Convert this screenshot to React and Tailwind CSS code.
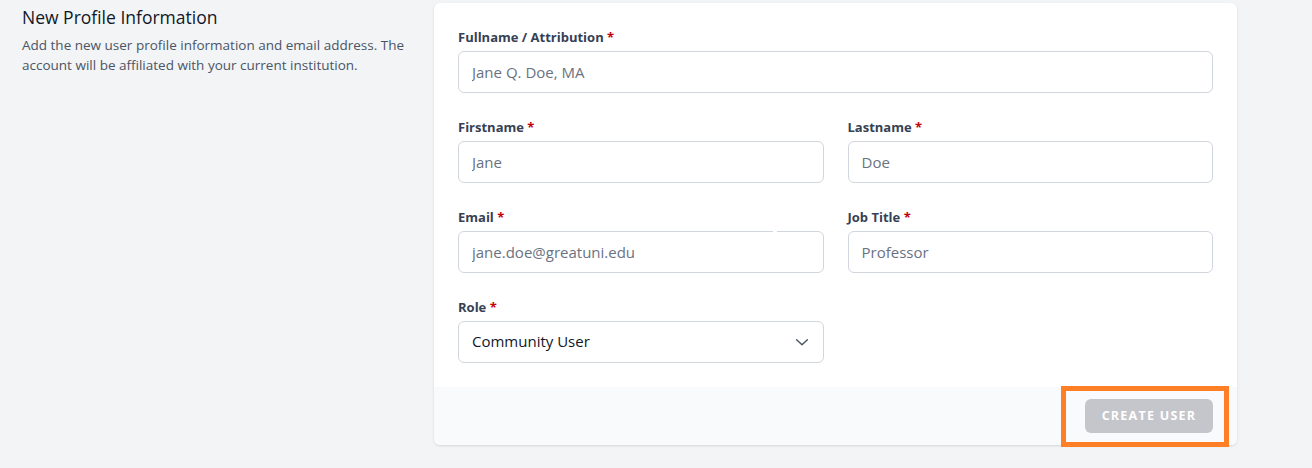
import React from 'react';

const font = { fontFamily: '"Open Sans", "Noto Sans", Arial, sans-serif' };

function Label({ children }) {
  return (
    <label className="block text-[13px] font-bold leading-5 text-gray-700">
      {children} <span className="text-red-700">*</span>
    </label>
  );
}

function Field({ label, placeholder, wide, notch }) {
  return (
    <div className={wide ? 'col-span-2' : ''}>
      <Label>{label}</Label>
      <div className="relative mt-1">
        <input
          type="text"
          placeholder={placeholder}
          className="block h-[42px] w-full rounded-md border border-gray-300 bg-white px-[13px] pb-px text-[15px] text-gray-900 placeholder:text-gray-500 focus:outline-none"
        />
        {notch && <span className="absolute left-[315px] top-0 h-px w-[4px] bg-white" />}
      </div>
    </div>
  );
}

function RoleSelect() {
  return (
    <div>
      <Label>Role</Label>
      <div className="mt-1 flex h-[42px] w-full items-center justify-between rounded-md border border-gray-300 bg-white pb-px pl-[13px] pr-[12px] text-[15px] text-gray-900">
        <span>Community User</span>
        <svg width="18" height="18" viewBox="0 0 20 20" fill="none" stroke="#4b5563" strokeWidth="1.6" strokeLinecap="round" strokeLinejoin="round">
          <path d="M4 7.5l6 5.5 6-5.5" />
        </svg>
      </div>
    </div>
  );
}

export default function App() {
  return (
    <div style={font} className="h-[468px] w-full overflow-hidden bg-gray-100">
      <div className="flex gap-6 pl-[22px] pt-[3px]">
        <div className="w-[388px] shrink-0">
          <h3 className="text-[17.5px] leading-7 text-gray-900">New Profile Information</h3>
          <p className="mt-1 text-[13.5px] leading-5 text-gray-600">
            Add the new user profile information and email address. The account will be affiliated with your current institution.
          </p>
        </div>

        <div className="relative w-[803px] shrink-0">
          <div className="overflow-hidden rounded-md bg-white shadow">
            <div className="grid grid-cols-2 gap-6 p-6">
              <Field wide label="Fullname / Attribution" placeholder="Jane Q. Doe, MA" />
              <Field label="Firstname" placeholder="Jane" />
              <Field label="Lastname" placeholder="Doe" />
              <Field notch label="Email" placeholder="jane.doe@greatuni.edu" />
              <Field label="Job Title" placeholder="Professor" />
              <RoleSelect />
            </div>
            <div className="flex justify-end bg-gray-50 px-6 py-3">
              <button
                type="button"
                className="h-[34px] w-[128px] rounded-md bg-[#c4c6cb] text-[12.5px] font-bold uppercase tracking-widest text-white"
              >
                Create User
              </button>
            </div>
          </div>
          {/* highlight box over the submit button */}
          <div className="pointer-events-none absolute bottom-[-2px] right-[8px] h-[61px] w-[168px] border-[5px] border-[#ff7f27]" />
        </div>
      </div>
    </div>
  );
}
